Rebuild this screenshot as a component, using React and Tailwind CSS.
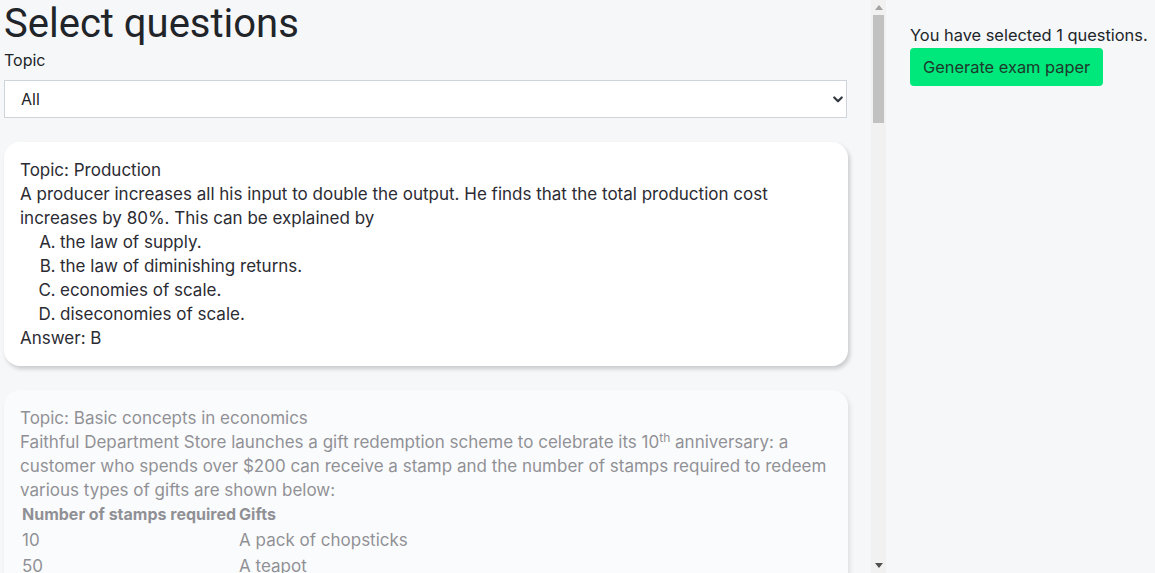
import React from "react";

const body = { fontFamily: '"Inter", "Open Sans", sans-serif' };

function Card({ topic, children, faded }) {
  return (
    <div
      className={
        "rounded-2xl bg-white px-4 py-4 text-[17px] leading-6 text-[#2b2b33] shadow-[2px_3px_4px_rgba(0,0,0,0.18)] " +
        (faded ? "opacity-50" : "")
      }
    >
      <div>Topic: {topic}</div>
      {children}
    </div>
  );
}

function Options({ items }) {
  return (
    <ol className="list-[upper-alpha] pl-10">
      {items.map((t) => (
        <li key={t}>{t}</li>
      ))}
    </ol>
  );
}

const extra = [
  {
    topic: "Demand and supply",
    q: "Which of the following would cause the demand curve for beef to shift to the right?",
    o: ["A fall in the price of beef.", "A rise in the price of pork.", "A fall in consumers' income.", "An improvement in the technology of raising cattle."],
    a: "B",
  },
  {
    topic: "Market structure",
    q: "Which of the following is a characteristic of a perfectly competitive market?",
    o: ["Firms sell differentiated products.", "There are barriers to entry.", "Each firm is a price taker.", "There is only one seller in the market."],
    a: "C",
  },
  {
    topic: "Firms and production",
    q: "The short run is a period of time in which a firm",
    o: ["can vary all its factors of production.", "has at least one fixed factor of production.", "cannot change its output.", "earns zero economic profit."],
    a: "B",
  },
  {
    topic: "Basic concepts in economics",
    q: "Opportunity cost refers to",
    o: ["the money spent on a good.", "the highest-valued option forgone.", "the total value of all options forgone.", "the cost of production of a good."],
    a: "B",
  },
  {
    topic: "Elasticity",
    q: "If the price elasticity of demand for a good is 0.5, a 10% rise in its price will lead to",
    o: ["a 5% fall in quantity demanded.", "a 20% fall in quantity demanded.", "a 5% rise in total revenue.", "no change in quantity demanded."],
    a: "A",
  },
  {
    topic: "Government intervention",
    q: "A price ceiling set below the equilibrium price will result in",
    o: ["a surplus of the good.", "a shortage of the good.", "a rise in the market price.", "no change in the quantity transacted."],
    a: "B",
  },
  {
    topic: "Division of labour",
    q: "Which of the following is an advantage of division of labour?",
    o: ["Work becomes more monotonous.", "Workers become more specialised and productive.", "Workers are more likely to become unemployed.", "Production is more easily disrupted."],
    a: "B",
  },
  {
    topic: "Money and banking",
    q: "Which of the following is a function of money?",
    o: ["A medium of exchange.", "A source of interest income.", "A factor of production.", "A public good."],
    a: "A",
  },
];

function FakeScrollbar() {
  return (
    <div className="flex h-screen w-[15px] shrink-0 flex-col bg-[#f1f1f1]">
      <div className="flex h-[15px] items-center justify-center">
        <svg width="8" height="5" viewBox="0 0 8 5">
          <path d="M4 0L8 5H0z" fill="#a3a3a3" />
        </svg>
      </div>
      <div className="flex-1 px-[2px]">
        <div className="h-[108px] w-full bg-[#c1c1c1]" />
      </div>
      <div className="flex h-[15px] items-center justify-center">
        <svg width="8" height="5" viewBox="0 0 8 5">
          <path d="M0 0H8L4 5z" fill="#505050" />
        </svg>
      </div>
    </div>
  );
}

export default function App() {
  return (
    <div className="flex h-screen w-full bg-[#f6f7f9]" style={body}>
      <div className="h-screen w-[871px] shrink-0 overflow-hidden pl-1 pr-[23px] pb-6">
        <h1
          className="text-[40px] leading-[48px] text-[#212529]"
          style={{ fontFamily: '"Roboto", "Liberation Sans", sans-serif' }}
        >
          Select questions
        </h1>
        <div className="text-[16px] leading-6 text-[#212529]">Topic</div>
        <div className="relative mt-2 mr-px">
          <select className="h-[38px] w-full appearance-none border border-[#ced4da] bg-white pl-4 text-[16px] text-[#212529] outline-none">
            <option>All</option>
          </select>
          <svg
            className="pointer-events-none absolute right-[3px] top-[13px] h-3 w-3"
            viewBox="0 0 16 16"
            fill="none"
            stroke="#343a40"
            strokeWidth="3"
            strokeLinecap="round"
            strokeLinejoin="round"
          >
            <path d="M3 6l5 5 5-5" />
          </svg>
        </div>

        <div className="mt-6 flex flex-col gap-6">
          <Card topic="Production">
            <div>
              A producer increases all his input to double the output. He finds that the total production cost
              increases by 80%. This can be explained by
            </div>
            <Options
              items={[
                "the law of supply.",
                "the law of diminishing returns.",
                "economies of scale.",
                "diseconomies of scale.",
              ]}
            />
            <div>Answer: B</div>
          </Card>

          <Card topic="Basic concepts in economics" faded>
            <div>
              Faithful Department Store launches a gift redemption scheme to celebrate its 10
              <sup className="text-[12px]">th</sup> anniversary: a customer who spends over $200 can receive a stamp
              and the number of stamps required to redeem various types of gifts are shown below:
            </div>
            <table className="-ml-px border-separate border-spacing-x-[3px] border-spacing-y-[1px]">
              <thead>
                <tr className="text-left">
                  <th className="p-0 pb-[2px] text-[16px] font-bold leading-[22px]">Number of stamps required</th>
                  <th className="p-0 pb-[2px] text-[16px] font-bold leading-[22px]">Gifts</th>
                </tr>
              </thead>
              <tbody>
                {[
                  ["10", "A pack of chopsticks"],
                  ["50", "A teapot"],
                  ["100", "A rice cooker"],
                  ["200", "A microwave oven"],
                ].map(([n, g]) => (
                  <tr key={n}>
                    <td className="p-0 leading-[25px]">{n}</td>
                    <td className="p-0 leading-[25px]">{g}</td>
                  </tr>
                ))}
              </tbody>
            </table>
            <div>Which of the following best describes the stamps in the above scheme?</div>
            <Options
              items={[
                "A medium of exchange.",
                "A store of value.",
                "A unit of account.",
                "A standard of deferred payment.",
              ]}
            />
            <div>Answer: A</div>
          </Card>

          {extra.map((e, i) => (
            <Card key={i} topic={e.topic} faded>
              <div>{e.q}</div>
              <Options items={e.o} />
              <div>Answer: {e.a}</div>
            </Card>
          ))}
        </div>
      </div>

      <FakeScrollbar />

      <div className="flex-1 pl-6 pt-[23px]">
        <div className="text-[16.4px] leading-6 text-[#212529]">You have selected 1 questions.</div>
        <button className="mt-px h-[38px] rounded-[4px] bg-[#00e77b] px-[13px] text-[16.4px] text-[#1d3a2c]">
          Generate exam paper
        </button>
      </div>
    </div>
  );
}
